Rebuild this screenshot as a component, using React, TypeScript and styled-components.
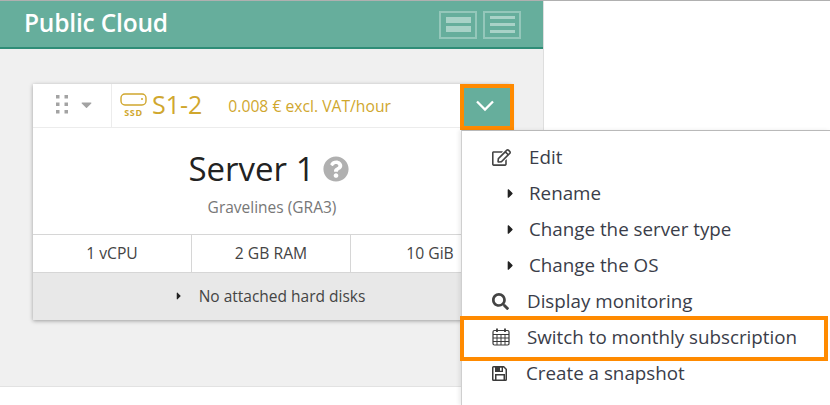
import React from "react";
import styled, { createGlobalStyle } from "styled-components";
import { FaRegEdit, FaSearch, FaCaretRight, FaCaretDown, FaQuestionCircle } from "react-icons/fa";

const Global = createGlobalStyle`
  html, body { margin: 0; padding: 0; background: #fff; width: 830px; height: 405px; overflow: hidden; }
  body { font-family: "Open Sans", "Liberation Sans", sans-serif; color: #333; }
`;
const Page = styled.div`position: relative; width: 830px; height: 405px; overflow: hidden; border-top: 1px solid #b0b0b0; box-sizing: border-box;`;
const Panel = styled.section`width: 544px; height: 386px; background: #f0f0f0; border-right: 1px solid #dedede; border-bottom: 1px solid #e2e2e2; box-sizing: border-box;`;
const Header = styled.header`
  height: 48px; box-sizing: border-box; background: #66ae9c; border-bottom: 2px solid #2f8d77;
  display: flex; align-items: center; justify-content: space-between; padding: 0 22px 0 24px;
`;
const Title = styled.h1`margin: 0 0 4px; font-size: 24.5px; font-weight: 600; color: #fff; letter-spacing: -0.2px;`;
const ViewToggles = styled.div`display: flex; gap: 6px; margin-top: 1px;`;
const Toggle = styled.div`
  width: 38px; height: 28px; box-sizing: border-box; border: 2px solid #94c7ba;
  display: flex; flex-direction: column; justify-content: center; align-items: center; gap: ${p => p.$gap}px;
`;
const ToggleBar = styled.span`display: block; width: 25px; height: ${p => p.$h}px; background: #a8d2c7;`;
const CardWrap = styled.div`padding: 35px 0 0 33px;`;
const Card = styled.article`width: 478px; background: #fff; box-shadow: 0 1px 4px rgba(0,0,0,.35);`;
const CardTop = styled.div`display: flex; height: 43px; border-bottom: 1px solid #ececec;`;
const Handle = styled.div`
  width: 79px; border-right: 1px solid #ececec; display: flex; align-items: center; justify-content: center; gap: 10px; color: #a3a3a3;
  padding: 0 0 3px 6px; box-sizing: border-box;
`;
const Flavor = styled.div`flex: 1; display: flex; align-items: center; padding-left: 8px; color: #d0a72e;`;
const FlavorName = styled.span`font-size: 25px; margin-left: 5px; margin-top: -4px;`;
const Price = styled.span`font-size: 15.7px; margin-left: 26px;`;
const Body = styled.div`height: 107px; box-sizing: border-box; padding-top: 20px; text-align: center; border-bottom: 1px solid #d6d6d6;`;
const ServerName = styled.div`
  font-size: 33px; line-height: 42px; color: #222; display: flex; justify-content: center; align-items: center; gap: 8px; padding-right: 7px;
  svg { color: #b0b0b0; }
`;
const Region = styled.div`font-size: 15.5px; color: #777; margin-top: 6px;`;
const Specs = styled.div`display: grid; grid-template-columns: repeat(3, 159px); height: 38px; border-bottom: 1px solid #d6d6d6; box-sizing: border-box;`;
const Spec = styled.div`
  display: flex; align-items: center; justify-content: center; font-size: 15.7px; color: #444; border-right: 1px solid #d6d6d6; padding-bottom: 2px;
`;
const Disks = styled.div`
  height: 47px; background: #e8e8e8; display: flex; align-items: center; justify-content: center; gap: 14px; font-size: 15.5px; color: #444; box-sizing: border-box; padding-bottom: 2px; margin-right: -2px; padding-right: 8px;
`;
const Focus = styled.div`
  position: absolute; left: 460px; top: 83px; width: 54px; height: 46px; box-sizing: border-box;
  border: 4px solid #ff8a00; background: #66ae9c; display: flex; align-items: center; justify-content: center; color: #fff; padding: 0 5px 2px 0;
`;
const Menu = styled.ul`
  position: absolute; left: 461px; top: 129px; right: 0; bottom: 0; margin: 0; padding: 8px 0 0; list-style: none; background: #fff;
  border-top: 1px solid #b9b9b9; border-left: 1px solid #cfcfcf; box-shadow: -2px 0 4px rgba(0,0,0,.08);
`;
const Item = styled.li`
  position: relative; height: 36px; display: flex; align-items: center; font-size: 18.8px; color: #3a3d49; padding-left: ${p => p.$pad}px; white-space: nowrap;
`;
const IconSlot = styled.span`width: ${p => p.$w}px; display: flex; flex: none; align-items: center; color: #444;`;
const Caret = styled(IconSlot)`color: #222;`;
const Highlight = styled.span`
  position: absolute; left: -2px; right: 2px; top: -3px; bottom: -6px; border: 4px solid #ff8a00;
`;

const Grip = () => (
  <svg width="12" height="19" viewBox="0 0 12 19" fill="#a3a3a3">
    {[0, 7.5, 15].map(y => [0, 8.5].map(x => <rect key={`${x}-${y}`} x={x} y={y} width="3.5" height="3.5" />))}
  </svg>
);
const Ssd = () => (
  <svg width="27" height="25" viewBox="0 0 27 25" fill="none" stroke="#d0a72e">
    <rect x="1" y="1" width="25" height="11" rx="4" strokeWidth="1.4" />
    <circle cx="22" cy="6" r="1" fill="#d0a72e" stroke="none" />
    <text x="13.5" y="23" textAnchor="middle" fontSize="9" fontWeight="700" fill="#d0a72e" stroke="none" fontFamily="Open Sans" letterSpacing="0.6">SSD</text>
  </svg>
);
const Chevron = () => (
  <svg width="18" height="12" viewBox="0 0 18 12" fill="none" stroke="#fff" strokeWidth="2.3">
    <path d="M1 1.5l8 8 8-8" />
  </svg>
);
const Calendar = () => (
  <svg width="18" height="18" viewBox="0 0 18 18" fill="none" stroke="#3a3a3a">
    <rect x="1" y="2.5" width="16" height="14.5" rx="1.5" strokeWidth="1.2" />
    <path d="M1 6.5h16M1 10h16M1 13.5h16M5 6.5V17M9 6.5V17M13 6.5V17" strokeWidth="1" />
    <path d="M5 0.5v3.5M13 0.5v3.5" strokeWidth="1.8" />
  </svg>
);
const Floppy = () => (
  <svg width="16" height="17" viewBox="0 0 16 17" fill="#3a3a3a">
    <path fillRule="evenodd" d="M1.5 1H12l3 3v10.5a1.5 1.5 0 0 1-1.5 1.5h-12A1.5 1.5 0 0 1 0 14.5v-12A1.5 1.5 0 0 1 1.5 1zM1.5 2.5v12H3V9h10v5.5h.5V4.6L11.4 2.5H11V7H3V2.5zM4.5 10.5v4h7v-4zM8 2.8h1.6v3H8z" />
  </svg>
);

export default function App() {
  return (
    <Page>
      <Global />
      <Panel>
        <Header>
          <Title>Public Cloud</Title>
          <ViewToggles>
            <Toggle $gap={3}><ToggleBar $h={6} /><ToggleBar $h={6} /></Toggle>
            <Toggle $gap={4}><ToggleBar $h={3} /><ToggleBar $h={3} /><ToggleBar $h={3} /></Toggle>
          </ViewToggles>
        </Header>
        <CardWrap>
          <Card>
            <CardTop>
              <Handle><Grip /><FaCaretDown size={17} /></Handle>
              <Flavor>
                <Ssd />
                <FlavorName>S1-2</FlavorName>
                <Price>0.008 € excl. VAT/hour</Price>
              </Flavor>
            </CardTop>
            <Body>
              <ServerName>Server 1 <FaQuestionCircle size={26} /></ServerName>
              <Region>Gravelines (GRA3)</Region>
            </Body>
            <Specs>
              <Spec>1 vCPU</Spec>
              <Spec>2 GB RAM</Spec>
              <Spec>10 GiB</Spec>
            </Specs>
            <Disks><FaCaretRight size={12} color="#222" /> No attached hard disks</Disks>
          </Card>
        </CardWrap>
      </Panel>
      <Focus><Chevron /></Focus>
      <Menu>
        <Item $pad={30}><IconSlot $w={37}><FaRegEdit size={19} /></IconSlot>Edit</Item>
        <Item $pad={41}><Caret $w={26}><FaCaretRight size={15} /></Caret>Rename</Item>
        <Item $pad={41}><Caret $w={26}><FaCaretRight size={15} /></Caret>Change the server type</Item>
        <Item $pad={41}><Caret $w={26}><FaCaretRight size={15} /></Caret>Change the OS</Item>
        <Item $pad={30}><IconSlot $w={35}><FaSearch size={17} /></IconSlot>Display monitoring</Item>
        <Item $pad={30}><IconSlot $w={35}><Calendar /></IconSlot>Switch to monthly subscription<Highlight /></Item>
        <Item $pad={30}><IconSlot $w={34}><Floppy /></IconSlot>Create a snapshot</Item>
      </Menu>
    </Page>
  );
}
